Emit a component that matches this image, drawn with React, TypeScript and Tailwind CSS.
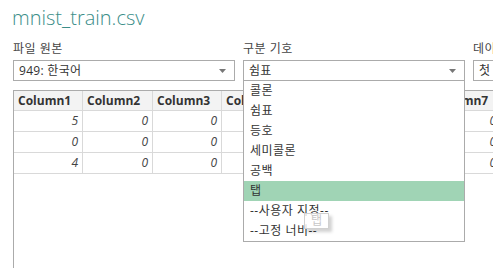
import React from 'react'

const font = "font-['Open_Sans','Noto_Sans_CJK_KR',sans-serif]"

const colWidths = ['w-[69px]', 'w-[70px]', 'w-[69px]', 'w-[70px]', 'w-[69px]', 'w-[70px]', 'w-[70px]']
const rows = [
  ['5', '0', '0', '0', '0', '0', '0'],
  ['0', '0', '0', '0', '0', '0', '0'],
  ['4', '0', '0', '0', '0', '0', '0'],
]

const options = ['콜론', '쉼표', '등호', '세미콜론', '공백', '탭', '--사용자 지정--', '--고정 너비--']

function Arrow() {
  return (
    <svg width="7" height="4" viewBox="0 0 7 4" className="shrink-0">
      <path d="M0 0h7L3.5 4z" fill="#777" />
    </svg>
  )
}

function Field({ label, value, width }: { label: string; value: string; width: string }) {
  return (
    <div className={`${width} shrink-0`}>
      <div className="h-[22px] leading-[22px] text-[12px] tracking-[0.5px] text-[#444]">{label}</div>
      <div className="h-[21px] border border-[#ababab] flex items-center pl-[5px] pr-[8px] text-[12px] tracking-[0.3px] text-[#333]">
        <span className="flex-1 whitespace-nowrap overflow-hidden">{value}</span>
        <Arrow />
      </div>
    </div>
  )
}

export default function App() {
  return (
    <div className={`${font} relative w-[493px] h-[268px] overflow-hidden bg-white`}>
      <div className="h-[38px] pl-[12px] pt-[4px] text-[20px] leading-[28px] font-light text-[#3b8e89]">
        mnist_train.csv
      </div>

      <div className="flex gap-[8px] pl-[13px]">
        <Field label="파일 원본" value="949: 한국어" width="w-[222px]" />
        <Field label="구분 기호" value="쉼표" width="w-[222px]" />
        <Field label="데이터 형식 검색" value="첫 200개 행을 기준으로" width="w-[222px]" />
      </div>

      {/* table */}
      <div className="mt-[9px] ml-[13px] w-[600px] h-[200px] border-l border-t border-[#ababab]">
        <div className="flex h-[20px] bg-[#f3f3f3] border-b border-[#d9d9d9]">
          {colWidths.map((w, i) => (
            <div
              key={i}
              className={`${w} shrink-0 border-r border-[#d9d9d9] pl-[4px] text-[12px] leading-[19px] font-bold text-[#333] whitespace-nowrap overflow-hidden`}
            >
              Column{i + 1}
            </div>
          ))}
        </div>
        {rows.map((r, ri) => (
          <div key={ri} className="flex h-[21px] border-b border-[#d9d9d9]">
            {r.map((v, ci) => (
              <div
                key={ci}
                className={`${colWidths[ci]} shrink-0 border-r border-[#d9d9d9] pr-[4px] text-right text-[12px] leading-[20px] italic text-[#444]`}
              >
                {v}
              </div>
            ))}
          </div>
        ))}
      </div>

      {/* open delimiter list */}
      <div className="absolute left-[243px] top-[80px] w-[222px] border border-[#ababab] bg-white">
        {options.map((o) => (
          <div
            key={o}
            className={`h-[20px] leading-[20px] pl-[6px] text-[12px] tracking-[0.5px] text-[#333] ${o === '탭' ? 'bg-[#a0d4b5]' : ''}`}
          >
            {o}
          </div>
        ))}
      </div>

      {/* drag ghost */}
      <div className="absolute left-[304px] top-[213px] w-[25px] h-[16px] bg-white/80 border border-[#d0d0d0] shadow-[3px_3px_3px_rgba(0,0,0,0.18)] text-[12px] leading-[14px] text-[#c8c8c8] text-center">
        탭
      </div>
    </div>
  )
}
